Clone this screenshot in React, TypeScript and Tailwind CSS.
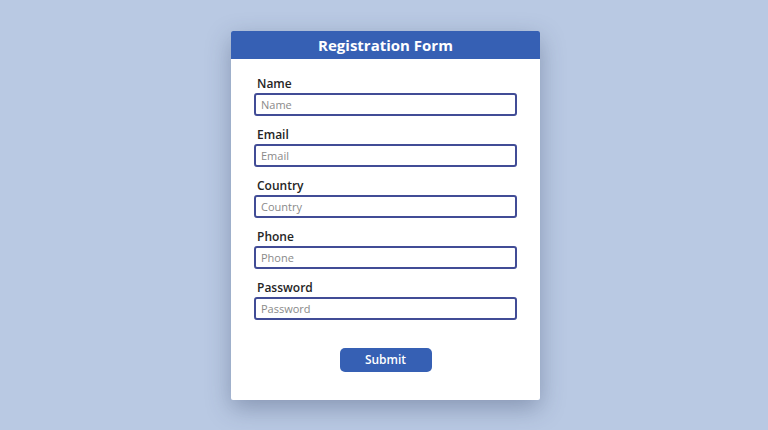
import React from "react";

const fields = ["Name", "Email", "Country", "Phone", "Password"];

export default function App() {
  return (
    <div
      className="w-[768px] h-[430px] bg-[#b9c9e3] pt-[31px] pl-[231px] overflow-hidden"
      style={{ fontFamily: '"Open Sans", "Noto Sans", sans-serif' }}
    >
      <div className="w-[309px] h-[369px] bg-white rounded-[2px] shadow-[0_8px_24px_rgba(40,55,90,0.35)] flex flex-col overflow-hidden">
        <div className="h-[28px] bg-[#3660b4] flex items-center justify-center text-white text-[15px] font-bold leading-none">
          Registration Form
        </div>
        <div className="flex flex-col px-[23px] pt-[16px]">
          {fields.map((f) => (
            <div key={f} className="flex flex-col mb-[10px]">
              <label className="text-[12px] leading-[18px] font-semibold text-[#252525] pl-[3px]">
                {f}
              </label>
              <input
                placeholder={f}
                className="h-[23px] w-full border-2 border-[#414c96] rounded-[3px] px-[5px] text-[11px] text-[#333] placeholder:text-[#8a8a8a] outline-none"
              />
            </div>
          ))}
          <div className="flex justify-center mt-[18px]">
            <button className="w-[92px] h-[24px] bg-[#3660b4] rounded-[5px] text-white text-[12px] font-semibold">
              Submit
            </button>
          </div>
        </div>
      </div>
    </div>
  );
}
